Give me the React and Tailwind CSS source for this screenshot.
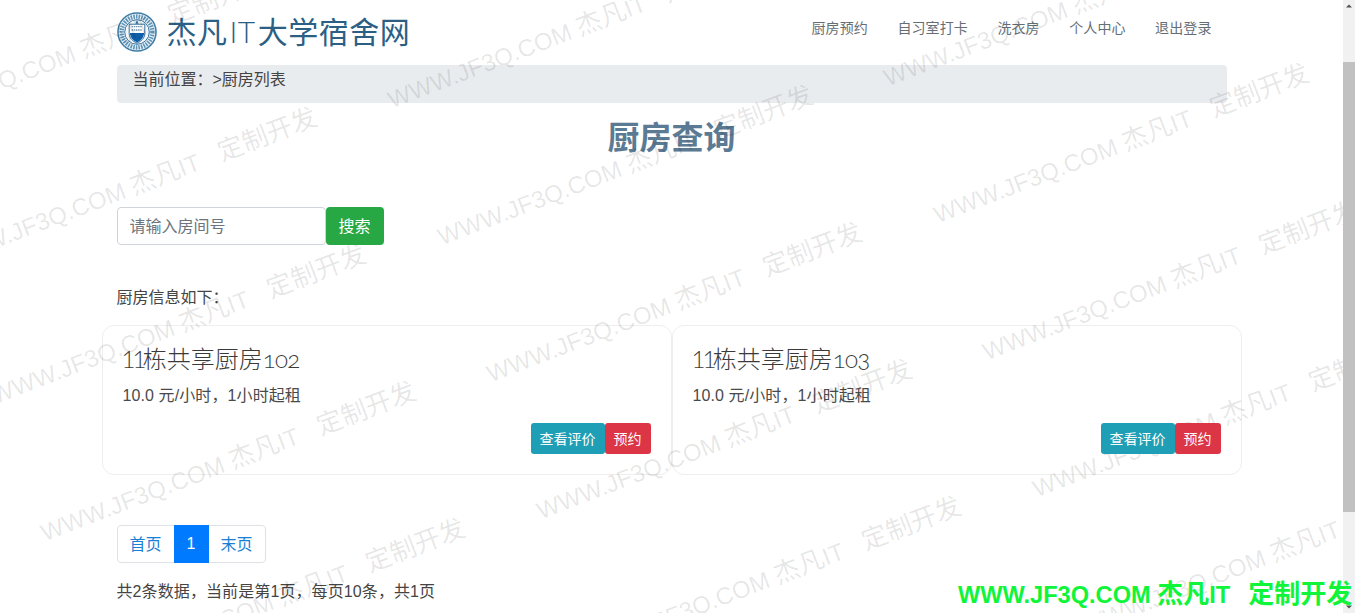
const FONT = "font-['Liberation_Sans','Noto_Sans_CJK_SC',sans-serif]";

function Logo() {
  return (
    <svg width="40" height="40" viewBox="0 0 41 41" className="shrink-0">
      <circle cx="20.5" cy="20.5" r="19.5" fill="#eef4f8" stroke="#3f7da6" strokeWidth="1.6" />
      <circle cx="20.5" cy="20.5" r="15.8" fill="none" stroke="#5c93b8" strokeWidth="4.6" strokeDasharray="1.6 1.1" />
      <circle cx="20.5" cy="20.5" r="12.6" fill="#f3f7fa" stroke="#2f6f9b" strokeWidth="1" />
      <path d="M12.5 12.5 H28.5 V22 C28.5 27 24.5 30 20.5 32 C16.5 30 12.5 27 12.5 22 Z" fill="#fff" stroke="#2a6a98" strokeWidth="1" />
      <path d="M13.2 21.5 H27.8 C27.5 26.5 24 29.5 20.5 31.2 C17 29.5 13.5 26.5 13.2 21.5 Z" fill="#0f5ea8" />
      <path d="M15 15 H26 M15 18.4 H26" stroke="#6d93ad" strokeWidth="1.4" strokeDasharray="1.5 .7" />
      <path d="M20.5 8.5 L18.8 12 H22.2 Z" fill="#2a6a98" />
    </svg>
  );
}

function Card({ room }) {
  return (
    <div className="flex-1 h-[150px] border border-[#eeeeee] rounded-xl pt-5 px-5 pb-5 flex flex-col">
      <h4 className="-ml-px -mt-[2px] text-2xl leading-[29px] font-light text-[#3a3a3a] font-['Lato','Noto_Sans_CJK_SC',sans-serif] oldstyle-nums">
        <span className="lining-nums tracking-[-3px] mr-[-0.5px]">11</span>
        栋共享厨房
        <span className="tracking-[-0.7px]">{room}</span>
      </h4>
      <p className="mt-[11px] text-base leading-6 text-[#4a4a4a] tracking-[0.1px]">10.0 元/小时，1小时起租</p>
      <div className="mt-auto flex justify-end relative z-20">
        <button className="h-[31px] w-[74px] text-sm text-white bg-[#1f9fb6] rounded-[3px]">查看评价</button>
        <button className="h-[31px] w-[46px] text-sm text-white bg-[#dc3545] rounded-[3px]">预约</button>
      </div>
    </div>
  );
}

function Watermark() {
  const marks = [];
  for (let j = -2; j < 5; j++) {
    for (let i = -2; i < 4; i++) {
      marks.push({
        key: `${i}-${j}`,
        left: 394 + i * 496 + j * 49.5,
        top: 85 + i * -22 + j * 137,
      });
    }
  }
  return (
    <div className="absolute inset-0 z-10 overflow-hidden pointer-events-none">
      {marks.map((m) => (
        <span
          key={m.key}
          className="absolute origin-bottom-left -rotate-[21deg] whitespace-nowrap text-2xl leading-7 text-black/10"
          style={{ left: m.left, top: m.top }}
        >
          WWW.JF3Q.COM <span className="text-[26px]">杰凡</span>IT<span className="ml-[21px] text-[26px]">定制开发</span>
        </span>
      ))}
    </div>
  );
}

function Scrollbar() {
  return (
    <div className="w-3 shrink-0 h-full bg-[#f1f1f1] flex flex-col items-center">
      <svg width="12" height="12" viewBox="0 0 12 12" className="shrink-0"><path d="M3 7.5 L6 4.5 L9 7.5 Z" fill="#505050" /></svg>
      <div className="mt-[50px] w-full h-[450px] bg-[#c1c1c1]" />
      <div className="flex-1" />
      <svg width="12" height="12" viewBox="0 0 12 12" className="shrink-0"><path d="M3 4.5 L6 7.5 L9 4.5 Z" fill="#505050" /></svg>
    </div>
  );
}

export default function App() {
  return (
    <div className={`relative flex w-full h-[613px] overflow-hidden bg-white ${FONT}`}>
      <main className="relative flex-1 min-w-0 overflow-hidden">
        <Watermark />
        <div className="w-[1140px] mx-auto px-[15px] relative">
          <header className="h-[65px] flex items-center justify-between">
            <div className="flex items-center gap-[10px] -mt-[1px]">
              <Logo />
              <span className="text-[30px] leading-10 text-[#2b5f84] whitespace-nowrap tracking-[0.5px]">
                杰凡<span className="font-['Lato'] font-light mx-[2px]">IT</span>大学宿舍网
              </span>
            </div>
            <nav className="flex items-center -mt-[10px] pr-[15px] gap-[29.5px] text-sm text-[#666e75] tracking-[0.1px]">
              <a>厨房预约</a>
              <a>自习室打卡</a>
              <a>洗衣房</a>
              <a>个人中心</a>
              <a>退出登录</a>
            </nav>
          </header>

          <div className="h-[38px] bg-[#e9ecef] rounded-[4px] px-4 text-base leading-[30px] text-[#444444]">当前位置：&gt;厨房列表</div>

          <h1 className="mt-[14px] text-center text-[32px] leading-[42px] font-bold text-[#5b7a94]">厨房查询</h1>

          <div className="mt-[48px] flex">
            <div className="w-[209px] h-[38px] border border-[#ced4da] rounded-[4px] px-3 text-base leading-[38px] text-[#6c757d]">请输入房间号</div>
            <button className="w-[58px] h-[38px] pt-px bg-[#28a745] rounded-[4px] text-base text-white relative z-20">搜索</button>
          </div>

          <p className="mt-[40px] text-base leading-6 text-[#444444] pt-px">厨房信息如下：</p>

          <div className="mt-[15px] -mx-[15px] flex">
            <Card room="102" />
            <Card room="103" />
          </div>

          <div className="mt-[50px] flex w-fit h-[38px] border border-[#dee2e6] rounded-[4px] text-base relative z-20">
            <a className="w-[56px] leading-[37px] text-center text-[#1a7fd6]">首页</a>
            <a className="w-[35px] -my-px leading-[38px] text-center text-white bg-[#007bff]">1</a>
            <a className="w-[56px] leading-[37px] text-center text-[#1a7fd6]">末页</a>
          </div>

          <p className="mt-[17px] text-base leading-6 text-[#444444] whitespace-nowrap tracking-[0.1px]">共2条数据，当前是第1页，每页10条，共1页</p>
        </div>
      </main>
      <Scrollbar />
      <div className="absolute z-20 left-[958px] top-[579px] whitespace-nowrap text-[23.6px] leading-[30px] font-bold text-[#10f53a]">WWW.JF3Q.COM <span className="text-[26px]">杰凡</span>IT<span className="ml-[18px] text-[26px]">定制开发</span></div>
    </div>
  );
}
